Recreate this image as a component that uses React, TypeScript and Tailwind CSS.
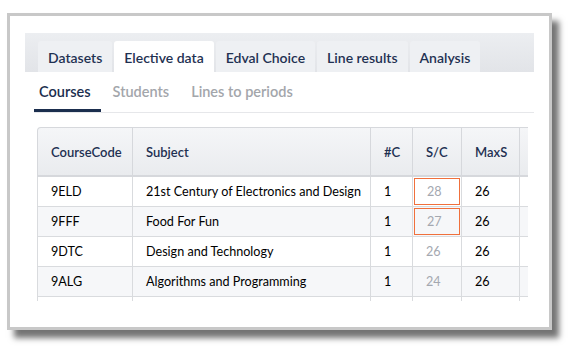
import React from 'react';

const tabs = ['Datasets', 'Elective data', 'Edval Choice', 'Line results', 'Analysis'];
const subTabs = ['Courses', 'Students', 'Lines to periods'];

const rows = [
  { code: '9ELD', subject: '21st Century of Electronics and Design', c: '1', sc: '28', max: '26', flag: true },
  { code: '9FFF', subject: 'Food For Fun', c: '1', sc: '27', max: '26', flag: true },
  { code: '9DTC', subject: 'Design and Technology', c: '1', sc: '26', max: '26', flag: false },
  { code: '9ALG', subject: 'Algorithms and Programming', c: '1', sc: '24', max: '26', flag: false },
  { code: '', subject: '', c: '', sc: '', max: '', flag: false },
];

const App: React.FC = () => {
  return (
    <div className="w-[571px] h-[346px] bg-white overflow-hidden font-['Lato',sans-serif]">
      <div className="ml-[7px] mt-[13px] w-[545px] h-[317px] border-[3px] border-[#c8c8c8] bg-white shadow-[7px_8px_6px_rgba(0,0,0,0.55)] pt-[17px] pl-[15px]">
        {/* main tabs */}
        <div className="w-[509px] h-[39px] bg-gradient-to-b from-[#eceef1] to-[#e2e4e8] flex items-end pl-[13px] gap-[2px]">
          {tabs.map((t) => (
            <div
              key={t}
              className={`h-[31px] px-[10px] pt-[2px] flex items-center rounded-t-[3px] text-[14px] font-semibold text-[#1f3152] ${
                t === 'Elective data' ? 'bg-white' : 'bg-[#eef0f3]'
              }`}
            >
              {t}
            </div>
          ))}
        </div>

        {/* sub tabs */}
        <div className="w-[500px] ml-[9px] h-[41px] flex items-stretch gap-[7px] border-b border-[#e6e7ea]">
          {subTabs.map((t, i) => (
            <div
              key={t}
              className={`pl-[5px] pr-[10px] flex items-center text-[14.5px] font-semibold ${
                i === 0 ? 'text-[#1b2e4e] border-b-[3px] border-[#1b2e4e] pt-[3px]' : 'text-[#a3a6ab]'
              }`}
            >
              {t}
            </div>
          ))}
        </div>

        {/* table */}
        <div className="ml-[12px] mt-[14px] w-[491px] h-[174px] overflow-hidden">
          <table className="border-separate border-spacing-0 table-fixed w-[560px] text-[12.6px]">
            <colgroup>
              <col className="w-[96px]" />
              <col className="w-[238px]" />
              <col className="w-[42px]" />
              <col className="w-[49px]" />
              <col className="w-[58px]" />
              <col />
            </colgroup>
            <thead>
              <tr className="bg-gradient-to-b from-[#f5f6f8] to-[#e9ebee]">
                {['CourseCode', 'Subject', '#C', 'S/C', 'MaxS', ''].map((h, i) => (
                  <th
                    key={i}
                    className={`h-[50px] px-[13px] pt-[3px] text-left text-[13px] font-semibold text-[#1f3152] border-t border-r border-b-2 border-[#d6d8dc] ${
                      i === 0 ? 'border-l rounded-tl-[4px]' : ''
                    }`}
                  >
                    {h}
                  </th>
                ))}
              </tr>
            </thead>
            <tbody>
              {rows.map((r, ri) => (
                <tr key={ri} className={ri % 2 === 1 ? 'bg-[#f6f7f9]' : 'bg-white'}>
                  <td className="h-[30px] px-[13px] pt-[2px] border-l border-r border-b border-[#d9dbde] text-black">{r.code}</td>
                  <td className="px-[13px] pt-[2px] border-r border-b border-[#d9dbde] text-black whitespace-nowrap">{r.subject}</td>
                  <td className="px-[13px] pt-[2px] border-r border-b border-[#d9dbde] text-black">{r.c}</td>
                  <td className="p-0 border-r border-b border-[#d9dbde]">
                    <div
                      className={`mx-[1px] h-[27px] pt-[2px] flex items-center pl-[12px] text-[#a4a8b0] ${
                        r.flag ? 'border border-[#f0703c]' : ''
                      }`}
                    >
                      {r.sc}
                    </div>
                  </td>
                  <td className="px-[13px] pt-[2px] border-r border-b border-[#d9dbde] text-black">{r.max}</td>
                  <td className="border-r border-b border-[#d9dbde]"></td>
                </tr>
              ))}
            </tbody>
          </table>
        </div>
      </div>
    </div>
  );
};

export default App;
